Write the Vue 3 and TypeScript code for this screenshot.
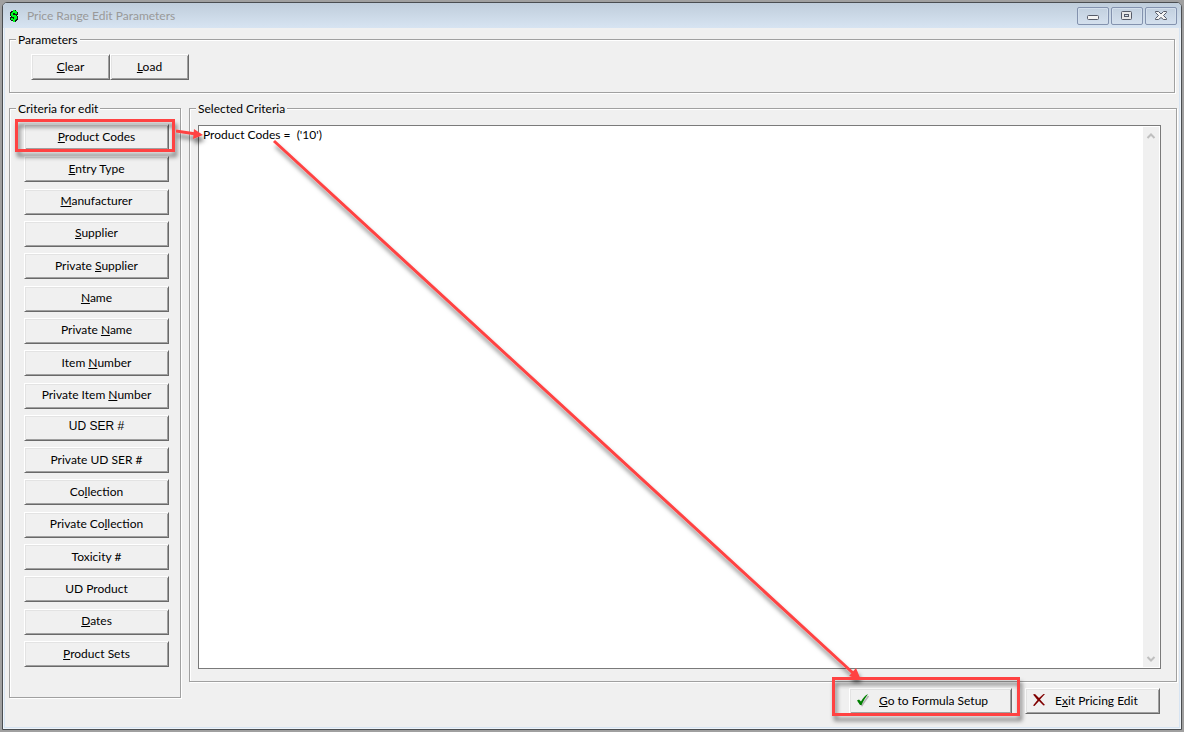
<script setup lang="ts">
import { ref } from 'vue'

interface Criterion {
  before: string
  key: string
  after: string
  plain?: boolean
}

const criteria: Criterion[] = [
  { before: '', key: 'P', after: 'roduct Codes' },
  { before: '', key: 'E', after: 'ntry Type' },
  { before: '', key: 'M', after: 'anufacturer' },
  { before: '', key: 'S', after: 'upplier' },
  { before: 'Private ', key: 'S', after: 'upplier' },
  { before: '', key: 'N', after: 'ame' },
  { before: 'Private ', key: 'N', after: 'ame' },
  { before: 'Item ', key: 'N', after: 'umber' },
  { before: 'Private Item ', key: 'N', after: 'umber' },
  { before: 'UD SER #', key: '', after: '', plain: true },
  { before: 'Private UD SER #', key: '', after: '' },
  { before: 'Co', key: 'l', after: 'lection' },
  { before: 'Private Co', key: 'l', after: 'lection' },
  { before: 'Toxicity #', key: '', after: '' },
  { before: 'UD Product', key: '', after: '' },
  { before: '', key: 'D', after: 'ates' },
  { before: '', key: 'P', after: 'roduct Sets' },
]

const selected = ref("Product Codes =  ('10')")
</script>

<template>
  <div class="desktop">
    <main class="window">
      <header class="titlebar">
        <svg class="app-icon" width="10" height="14" viewBox="0 0 10 14" shape-rendering="crispEdges" aria-hidden="true">
          <path fill="#102010" d="M4 1h3v1h1v1h1v3H8v1h1v4H8v1H7v1H4v-1H2v-1H1V8h1V7H1V3h1V2h2Z" />
          <path fill="#00ff20" d="M4 1h2v1h2v3H6V4H4v2h3v1h1v3H7v1H6v2H4v-2H2V9h2v1h1V8H3V7H2V4h1V3h1Z" />
        </svg>
        <h1>Price Range Edit Parameters</h1>
        <div class="captions">
          <button type="button" aria-label="Minimize">
            <svg width="12" height="12" viewBox="0 0 12 12"><rect x="0.500" y="5.500" width="11" height="4" rx="1" fill="#f4f4f4" stroke="#565b68" /></svg>
          </button>
          <button type="button" aria-label="Restore">
            <svg width="12" height="12" viewBox="0 0 12 12"><rect x="0.500" y="1.500" width="10" height="8" rx="1" fill="#e8e8e8" stroke="#565b68" /><rect x="3.500" y="4.500" width="4" height="2" fill="#d2deeb" stroke="#565b68" /></svg>
          </button>
          <button type="button" aria-label="Close">
            <svg width="12" height="12" viewBox="0 0 12 12"><path d="M0.500 1.500H3.500L6 4 8.500 1.500H11.500V2.500L8.500 5.500 11.500 8.500V9.500H8.500L6 7.500 3.500 9.500H0.500V8.500L3.500 5.500 0.500 2.500Z" fill="#f4f4f4" stroke="#565b68" /></svg>
          </button>
        </div>
      </header>

      <div class="client">
        <fieldset class="group parameters">
          <legend>Parameters</legend>
          <div class="pair">
            <button type="button" class="btn"><span><u>C</u>lear</span></button>
            <button type="button" class="btn"><span><u>L</u>oad</span></button>
          </div>
        </fieldset>

        <div class="columns">
          <fieldset class="group criteria">
            <legend>Criteria for edit</legend>
            <div class="list">
              <button v-for="(c, i) in criteria" :key="i" type="button" class="btn" :class="{ plain: c.plain }">
                <span>{{ c.before }}<u v-if="c.key">{{ c.key }}</u>{{ c.after }}</span>
              </button>
            </div>
          </fieldset>

          <div class="right">
            <fieldset class="group selection">
              <legend id="selected-label">Selected Criteria</legend>
              <div class="memo">
                <textarea v-model="selected" aria-labelledby="selected-label" spellcheck="false"></textarea>
                <div class="scroll">
                  <button type="button" aria-label="Scroll up">
                    <svg width="10" height="8" viewBox="0 0 10 8"><path d="M1.500 6L5 2.500 8.500 6" /></svg>
                  </button>
                  <button type="button" aria-label="Scroll down">
                    <svg width="10" height="8" viewBox="0 0 10 8"><path d="M1.500 2L5 5.500 8.500 2" /></svg>
                  </button>
                </div>
              </div>
            </fieldset>
            <div class="actions">
              <button type="button" class="btn go">
                <svg width="14" height="14" viewBox="0 0 14 14" aria-hidden="true">
                  <path d="M3 9L6 12.500 7.500 10 12.500 3" fill="none" stroke="#b4b4b4" stroke-width="1.500" />
                  <path d="M1 7.500L3 6.500 5 8.500C7 5 9 2.500 12 1 9.500 4.500 7.500 8 5.500 12H4Z" fill="#008000" />
                </svg>
                <span><u>G</u>o to Formula Setup</span>
              </button>
              <button type="button" class="btn exit">
                <svg width="14" height="14" viewBox="0 0 14 14" aria-hidden="true">
                  <path d="M1 1.500L3 1 7 5 11.500 1H13L8 6.500 13 12 11.500 12.500 7 8 2.500 13 1 12.500 5.500 7Z" fill="#800000" />
                </svg>
                <span>E<u>x</u>it Pricing Edit</span>
              </button>
            </div>
          </div>
        </div>
      </div>
    </main>

    <svg class="callouts" viewBox="0 0 1184 732" preserveAspectRatio="none" aria-hidden="true">
      <defs>
        <filter id="shade" filterUnits="userSpaceOnUse" x="0" y="0" width="1184" height="732">
          <feDropShadow dx="2" dy="5" stdDeviation="2" flood-color="#000" flood-opacity="0.5" />
        </filter>
      </defs>
      <g filter="url(#shade)">
        <rect x="16.500" y="120.500" width="157" height="30" />
        <rect x="833.500" y="678.500" width="185" height="36" />
        <path d="M176 131L196 134M274 141L853 673" />
        <path class="head" d="M203 135L193 139 194 129ZM861 680L849 676 856 668Z" />
      </g>
    </svg>
  </div>
</template>

<style>
body {
  margin: 0;
}
</style>

<style scoped>
* {
  box-sizing: border-box;
}

.desktop {
  position: relative;
  display: flex;
  min-height: 100vh;
  padding: 2px;
  background: #a0a0a0;
  color: #000;
  font: 12px/15px Lato, 'Open Sans', sans-serif;
}

.window {
  flex: 1;
  display: flex;
  flex-direction: column;
  border: 1px solid #4a4d50;
  border-radius: 5px 5px 0 0;
  background: #f0f0f0;
  box-shadow: inset 0 0 0 1px #eef4fa, inset 0 0 0 2px #d7e4f2;
}

.titlebar {
  display: flex;
  align-items: center;
  height: 25px;
  padding: 0 4px 0 6px;
  border-radius: 4px 4px 0 0;
  background: linear-gradient(#bfcddb, #d7e4f2);
}

.app-icon {
  margin-right: 8px;
}

h1 {
  flex: 1;
  margin: 0;
  color: #999;
  font-size: 12px;
  font-weight: 400;
}

.captions {
  display: flex;
  gap: 2px;
}

.captions button {
  display: flex;
  align-items: center;
  justify-content: center;
  width: 32px;
  height: 18px;
  padding: 0;
  border: 1px solid #8392ae;
  border-radius: 2px;
  background: linear-gradient(#c2d0df, #d4e0ee);
  box-shadow: inset 0 0 0 1px #d3dfec;
}

.client {
  flex: 1;
  display: flex;
  flex-direction: column;
  gap: 8px;
  padding: 4px 4px 5px 6px;
}

.group {
  min-width: 0;
  margin: 0;
  padding: 0;
  border: 1px solid #a0a0a0;
  box-shadow: 1px 1px 0 #fff, inset 1px 1px 0 #fff;
}

legend {
  margin-left: 6px;
  padding: 0 2px;
  background: #f0f0f0;
}

.parameters {
  margin-right: 2px;
}

.pair {
  display: flex;
  padding: 7px 21px 12px;
}

.pair .btn {
  width: 79px;
}

.btn {
  display: flex;
  align-items: center;
  justify-content: center;
  height: 26px;
  padding: 0 0 2px;
  border: 1px solid;
  border-color: #fff #696969 #696969 #fff;
  background: #f0f0f0;
  box-shadow: inset 1px 1px 0 #e3e3e3, inset -1px -1px 0 #a0a0a0;
  color: #000;
  font: inherit;
  white-space: nowrap;
}

.btn.plain {
  font: 12px/15px 'Liberation Sans', sans-serif;
}

u {
  text-decoration-thickness: 1px;
  text-underline-offset: 1px;
}

.columns {
  flex: 1;
  display: flex;
  gap: 8px;
}

.criteria {
  display: flex;
  flex-direction: column;
  width: 172px;
  margin-bottom: 26px;
}

.list {
  flex: 1;
  display: flex;
  flex-direction: column;
  justify-content: space-between;
  padding: 8px 11px 30px 14px;
}

.right {
  flex: 1;
  display: flex;
  flex-direction: column;
  min-width: 0;
}

.selection {
  flex: 1;
  display: flex;
  flex-direction: column;
}

.memo {
  flex: 1;
  display: flex;
  margin: 9px 15px 12px 8px;
  border: 1px solid #7a7a7a;
  background: #fff;
}

textarea {
  flex: 1;
  min-width: 0;
  padding: 1px 4px;
  border: 0;
  outline: 0;
  resize: none;
  background: #fff;
  color: #000;
  font: inherit;
}

.scroll {
  display: flex;
  flex-direction: column;
  justify-content: space-between;
  width: 16px;
  margin: 1px;
  background: #f0f0f0;
}

.scroll button {
  display: flex;
  align-items: center;
  justify-content: center;
  height: 17px;
  padding: 0;
  border: 0;
  background: none;
}

.scroll path {
  fill: none;
  stroke: #bfbfbf;
  stroke-width: 2;
}

.actions {
  display: flex;
  justify-content: flex-end;
  gap: 13px;
  padding: 6px 17px 10px 0;
}

.go,
.exit {
  gap: 9px;
  justify-content: flex-start;
  padding-left: 6px;
}

.go {
  width: 163px;
}

.exit {
  width: 135px;
}

.callouts {
  position: absolute;
  inset: 0;
  width: 100%;
  height: 100%;
  pointer-events: none;
}

.callouts rect,
.callouts path {
  fill: none;
  stroke: #ff4343;
  stroke-width: 3;
}

.callouts .head {
  fill: #ff4343;
  stroke: none;
}
</style>
